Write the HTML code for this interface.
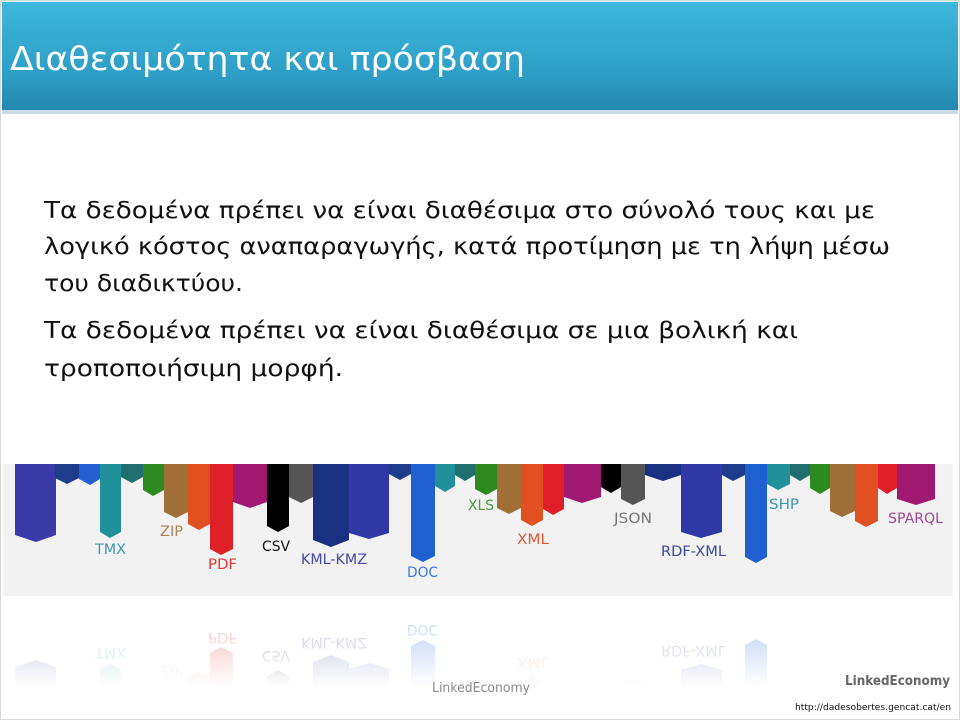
<!DOCTYPE html>
<html><head><meta charset="utf-8"><style>
body{margin:0;width:960px;height:720px;overflow:hidden;background:#fff;font-family:"DejaVu Sans","Liberation Sans",sans-serif;}
</style></head><body>
<svg width="960" height="720" viewBox="0 0 960 720" xmlns="http://www.w3.org/2000/svg" style="position:absolute;left:0;top:0">
<defs>
<linearGradient id="hd" x1="0" y1="0" x2="0" y2="1">
<stop offset="0" stop-color="#3fb8de"/><stop offset="0.7" stop-color="#2c9cc4"/><stop offset="1" stop-color="#2387ac"/></linearGradient>
<linearGradient id="fade" x1="0" y1="0" x2="0" y2="1">
<stop offset="0" stop-color="#fff" stop-opacity="0.35"/><stop offset="1" stop-color="#fff" stop-opacity="0"/></linearGradient>
<mask id="m"><rect x="0" y="606" width="960" height="80" fill="url(#fade)"/></mask>
<g id="bars">
<g font-family="DejaVu Sans, sans-serif" font-size="14">
<path d="M15 464H56V535L36 542L15 535Z" fill="#3a3aa8"/>
<path d="M55 464H79V478L67 484L55 478Z" fill="#1e3c8c"/>
<path d="M79 464H100V479L90 485L79 479Z" fill="#2060d0"/>
<path d="M100 464H121V532L110 538L100 532Z" fill="#20909a"/>
<path d="M121 464H143V477L132 483L121 477Z" fill="#206e6e"/>
<path d="M143 464H164V490L153 496L143 490Z" fill="#2e8a20"/>
<path d="M164 464H188V512L176 518L164 512Z" fill="#a07038"/>
<path d="M188 464H210V524L199 530L188 524Z" fill="#e05020"/>
<path d="M210 464H233V549L221 555L210 549Z" fill="#e02028"/>
<path d="M233 464H267V502L250 508L233 502Z" fill="#a01870"/>
<path d="M267 464H289V526L278 532L267 526Z" fill="#000"/>
<path d="M289 464H313V497L301 503L289 497Z" fill="#555"/>
<path d="M313 464H349V540L331 547L313 540Z" fill="#1a3080"/>
<path d="M349 464H389V533L369 539L349 533Z" fill="#3038a8"/>
<path d="M389 464H411V474L400 480L389 474Z" fill="#1e3c8c"/>
<path d="M411 464H435V556L423 562L411 556Z" fill="#1e60d0"/>
<path d="M435 464H455V486L445 492L435 486Z" fill="#20909a"/>
<path d="M455 464H475V475L465 481L455 475Z" fill="#206e6e"/>
<path d="M475 464H497V489L486 495L475 489Z" fill="#2e8a20"/>
<path d="M497 464H521V508L509 514L497 508Z" fill="#a07038"/>
<path d="M521 464H543V520L532 526L521 520Z" fill="#e05020"/>
<path d="M543 464H564V509L553 515L543 509Z" fill="#e02028"/>
<path d="M564 464H601V497L582 503L564 497Z" fill="#a01870"/>
<path d="M601 464H621V487L611 493L601 487Z" fill="#000"/>
<path d="M621 464H645V499L633 505L621 499Z" fill="#555"/>
<path d="M645 464H681V475L663 481L645 475Z" fill="#1a3080"/>
<path d="M681 464H722V532L701 538L681 532Z" fill="#3038a8"/>
<path d="M722 464H745V475L733 481L722 475Z" fill="#1e3c8c"/>
<path d="M745 464H767V557L756 563L745 557Z" fill="#1e60d0"/>
<path d="M767 464H790V484L778 490L767 484Z" fill="#20909a"/>
<path d="M790 464H810V475L800 481L790 475Z" fill="#206e6e"/>
<path d="M810 464H830V488L820 494L810 488Z" fill="#2e8a20"/>
<path d="M830 464H855V511L842 517L830 511Z" fill="#a07038"/>
<path d="M855 464H878V521L866 527L855 521Z" fill="#e05020"/>
<path d="M878 464H897V488L887 494L878 488Z" fill="#e02028"/>
<path d="M897 464H935V499L916 505L897 499Z" fill="#a01870"/>
<text x="95" y="554" fill="#3a9aa8" textLength="31" lengthAdjust="spacingAndGlyphs">TMX</text>
<text x="160" y="536" fill="#b08058" textLength="23" lengthAdjust="spacingAndGlyphs">ZIP</text>
<text x="208" y="569" fill="#e03838" textLength="29" lengthAdjust="spacingAndGlyphs">PDF</text>
<text x="262" y="551" fill="#111" textLength="28" lengthAdjust="spacingAndGlyphs">CSV</text>
<text x="301" y="564" fill="#4848a8" textLength="66" lengthAdjust="spacingAndGlyphs">KML-KMZ</text>
<text x="407" y="577" fill="#3878d8" textLength="31" lengthAdjust="spacingAndGlyphs">DOC</text>
<text x="468" y="510" fill="#4a9a38" textLength="26" lengthAdjust="spacingAndGlyphs">XLS</text>
<text x="517" y="544" fill="#e05838" textLength="32" lengthAdjust="spacingAndGlyphs">XML</text>
<text x="614" y="523" fill="#777" textLength="38" lengthAdjust="spacingAndGlyphs">JSON</text>
<text x="661" y="556" fill="#3a4898" textLength="65" lengthAdjust="spacingAndGlyphs">RDF-XML</text>
<text x="769" y="509" fill="#3a9aa8" textLength="30" lengthAdjust="spacingAndGlyphs">SHP</text>
<text x="888" y="523" fill="#a04890" textLength="55" lengthAdjust="spacingAndGlyphs">SPARQL</text>
</g></g>
</defs>
<rect x="0.5" y="0.5" width="959" height="719" fill="#fff" stroke="#d8d8d8"/>
<rect x="3" y="464" width="950" height="132" fill="#f2f2f2"/>
<use href="#bars"/>
<g mask="url(#m)"><g transform="translate(0,1202) scale(1,-1)"><use href="#bars"/></g></g>
<rect x="2" y="2" width="956" height="110" fill="url(#hd)"/>
<rect x="2" y="110" width="956" height="4" fill="#c8dde6"/>
<text x="10" y="70" fill="#fff" font-size="33" font-family="DejaVu Sans, sans-serif" textLength="515" lengthAdjust="spacingAndGlyphs">Διαθεσιμότητα και πρόσβαση</text>
<g font-size="23" fill="#111" font-family="DejaVu Sans, sans-serif">
<text x="44" y="218" textLength="831" lengthAdjust="spacingAndGlyphs">Τα δεδομένα πρέπει να είναι διαθέσιμα στο σύνολό τους και με</text>
<text x="44" y="254" textLength="846" lengthAdjust="spacingAndGlyphs">λογικό κόστος αναπαραγωγής, κατά προτίμηση με τη λήψη μέσω</text>
<text x="44" y="291" textLength="199" lengthAdjust="spacingAndGlyphs">του διαδικτύου.</text>
<text x="44" y="338" textLength="754" lengthAdjust="spacingAndGlyphs">Τα δεδομένα πρέπει να είναι διαθέσιμα σε μια βολική και</text>
<text x="44" y="376" textLength="299" lengthAdjust="spacingAndGlyphs">τροποποιήσιμη μορφή.</text>
</g>
<text x="432" y="692" fill="#8a8a8a" font-size="13" textLength="98" lengthAdjust="spacingAndGlyphs">LinkedEconomy</text>
<text x="845" y="685" fill="#666" font-size="13" font-weight="bold" textLength="105" lengthAdjust="spacingAndGlyphs">LinkedEconomy</text>
<text x="795" y="710" fill="#111" font-size="9" textLength="156" lengthAdjust="spacingAndGlyphs">http://dadesobertes.gencat.cat/en</text>
</svg>
</body></html>
